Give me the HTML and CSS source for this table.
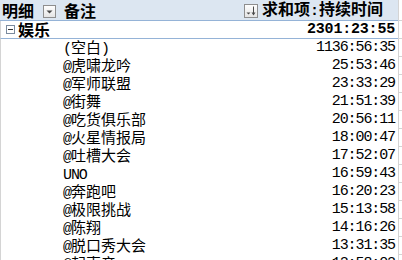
FILE: index.html
```html
<!DOCTYPE html>
<html lang="zh">
<head>
<meta charset="utf-8">
<link rel="stylesheet" href="styles.css">
</head>
<body>
<div class="sheet">
  <div class="row hdr">
    <div class="main">
      <div class="ca"><span class="hb">明细</span><svg class="btn b1" width="13" height="13" viewBox="0 0 13 13"><defs><linearGradient id="g1" x1="0" y1="0" x2="0" y2="1"><stop offset="0" stop-color="#ffffff"/><stop offset="1" stop-color="#e4e4e4"/></linearGradient></defs><rect x="0.5" y="0.5" width="12" height="12" fill="url(#g1)" stroke="#8e8e8e"/><path d="M3.5 5.5h6l-3 3z" fill="#4a4a4a"/></svg></div>
      <div class="cb"><span class="hb">备注</span></div>
      <div class="cc"><svg class="btn b2" width="14" height="14" viewBox="0 0 14 14"><defs><linearGradient id="g2" x1="0" y1="0" x2="0" y2="1"><stop offset="0" stop-color="#ffffff"/><stop offset="1" stop-color="#e4e4e4"/></linearGradient></defs><rect x="0.5" y="0.5" width="13" height="13" fill="url(#g2)" stroke="#8e8e8e"/><path d="M2.5 8.5h4l-2 2z" fill="#4a4a4a"/><path d="M9.5 2.5v8" stroke="#4a4a4a" stroke-width="1"/><path d="M7.5 8.5h4l-2 3z" fill="#4a4a4a"/></svg><span class="hb">求和项<span class="mb">:</span>持续时间</span></div>
    </div>
    <div class="edge"></div>
  </div>
  <div class="row grp">
    <div class="main">
      <div class="ca"><svg class="minus" width="9" height="9" viewBox="0 0 9 9"><rect x="0.5" y="0.5" width="8" height="8" fill="#fff" stroke="#7a8a9e"/><path d="M2 4.5h5" stroke="#333" stroke-width="1"/></svg><span class="gb">娱乐</span></div>
      <div class="cb"></div>
      <div class="cc"><span class="vb">2301:23:55</span></div>
    </div>
    <div class="edge"></div>
  </div>
  <div class="row"><div class="main"><div class="ca"></div><div class="cb"><span class="t"><span class="m">(</span>空白<span class="m">)</span></span></div><div class="cc"><span class="v">1136:56:35</span></div></div><div class="edge"></div></div>
  <div class="row"><div class="main"><div class="ca"></div><div class="cb"><span class="t"><span class="m">@</span>虎啸龙吟</span></div><div class="cc"><span class="v">25:53:46</span></div></div><div class="edge"></div></div>
  <div class="row"><div class="main"><div class="ca"></div><div class="cb"><span class="t"><span class="m">@</span>军师联盟</span></div><div class="cc"><span class="v">23:33:29</span></div></div><div class="edge"></div></div>
  <div class="row"><div class="main"><div class="ca"></div><div class="cb"><span class="t"><span class="m">@</span>街舞</span></div><div class="cc"><span class="v">21:51:39</span></div></div><div class="edge"></div></div>
  <div class="row"><div class="main"><div class="ca"></div><div class="cb"><span class="t"><span class="m">@</span>吃货俱乐部</span></div><div class="cc"><span class="v">20:56:11</span></div></div><div class="edge"></div></div>
  <div class="row"><div class="main"><div class="ca"></div><div class="cb"><span class="t"><span class="m">@</span>火星情报局</span></div><div class="cc"><span class="v">18:00:47</span></div></div><div class="edge"></div></div>
  <div class="row"><div class="main"><div class="ca"></div><div class="cb"><span class="t"><span class="m">@</span>吐槽大会</span></div><div class="cc"><span class="v">17:52:07</span></div></div><div class="edge"></div></div>
  <div class="row"><div class="main"><div class="ca"></div><div class="cb"><span class="t"><span class="m">UNO</span></span></div><div class="cc"><span class="v">16:59:43</span></div></div><div class="edge"></div></div>
  <div class="row"><div class="main"><div class="ca"></div><div class="cb"><span class="t"><span class="m">@</span>奔跑吧</span></div><div class="cc"><span class="v">16:20:23</span></div></div><div class="edge"></div></div>
  <div class="row"><div class="main"><div class="ca"></div><div class="cb"><span class="t"><span class="m">@</span>极限挑战</span></div><div class="cc"><span class="v">15:13:58</span></div></div><div class="edge"></div></div>
  <div class="row"><div class="main"><div class="ca"></div><div class="cb"><span class="t"><span class="m">@</span>陈翔</span></div><div class="cc"><span class="v">14:16:26</span></div></div><div class="edge"></div></div>
  <div class="row"><div class="main"><div class="ca"></div><div class="cb"><span class="t"><span class="m">@</span>脱口秀大会</span></div><div class="cc"><span class="v">13:31:35</span></div></div><div class="edge"></div></div>
  <div class="row"><div class="main"><div class="ca"></div><div class="cb"><span class="t"><span class="m">@</span>起声音</span></div><div class="cc"><span class="v">12:58:02</span></div></div><div class="edge"></div></div>
</div>
</body>
</html>
```

FILE: styles.css
```css
* { box-sizing: border-box; }
html, body { margin: 0; padding: 0; }
body {
  width: 402px;
  height: 260px;
  overflow: hidden;
  background: #ffffff;
  color: #000000;
  font-family: "Noto Sans CJK SC", sans-serif;
}
.sheet { display: flex; flex-direction: column; width: 402px; }
.row { display: flex; flex: none; height: 18px; }
.main {
  display: flex;
  width: 398px;
  height: 18px;
  border-left: 1px solid #d4d4d4;
}
.edge {
  width: 4px;
  height: 18px;
  border-left: 1px solid #d4d4d4;
  border-bottom: 1px solid #d4d4d4;
}
.ca, .cb, .cc { display: flex; align-items: center; height: 100%; }
.ca { width: 60px; padding-left: 1px; }
.cb { width: 181px; padding-left: 2px; }
.cc { flex: 1; justify-content: flex-end; padding-right: 3px; }

.hdr { height: 21px; }
.hdr .main {
  height: 21px;
  border-left: none;
  background: #dce6f1;
  border-bottom: 1px solid #95b3d7;
}
.hdr .edge { height: 21px; }
.hdr .ca { width: 61px; padding-left: 2px; }
.hdr .cb { padding-left: 3px; }
.hdr .cc { justify-content: flex-start; padding-left: 2px; }
.btn { display: block; flex: none; }
.b1 { margin-left: 9px; margin-top: 2px; }
.b2 { margin-right: 4px; margin-top: 1px; }

.hb {
  font-size: 16px;
  line-height: 20px;
  font-weight: 700;
  white-space: nowrap;
}
.mb {
  font-family: "Liberation Mono", monospace;
  font-weight: 700;
  font-size: 15px;
}

.grp .main { border-bottom: 1px solid #95b3d7; }
.grp .ca { overflow: visible; padding-left: 5px; }
.minus { display: block; flex: none; margin-right: 3px; }
.gb {
  font-size: 16px;
  line-height: 17px;
  font-weight: 700;
  white-space: nowrap;
}
.vb {
  font-family: "Liberation Mono", monospace;
  font-weight: 700;
  font-size: 15px;
  letter-spacing: -0.2px;
  line-height: 17px;
}

.t {
  font-size: 15px;
  line-height: 18px;
  white-space: nowrap;
}
.m {
  font-family: "Liberation Mono", monospace;
  font-size: 15px;
  letter-spacing: -1.1px;
}
.v {
  font-family: "Liberation Mono", monospace;
  font-size: 15px;
  line-height: 18px;
  letter-spacing: -1.1px;
}
```
